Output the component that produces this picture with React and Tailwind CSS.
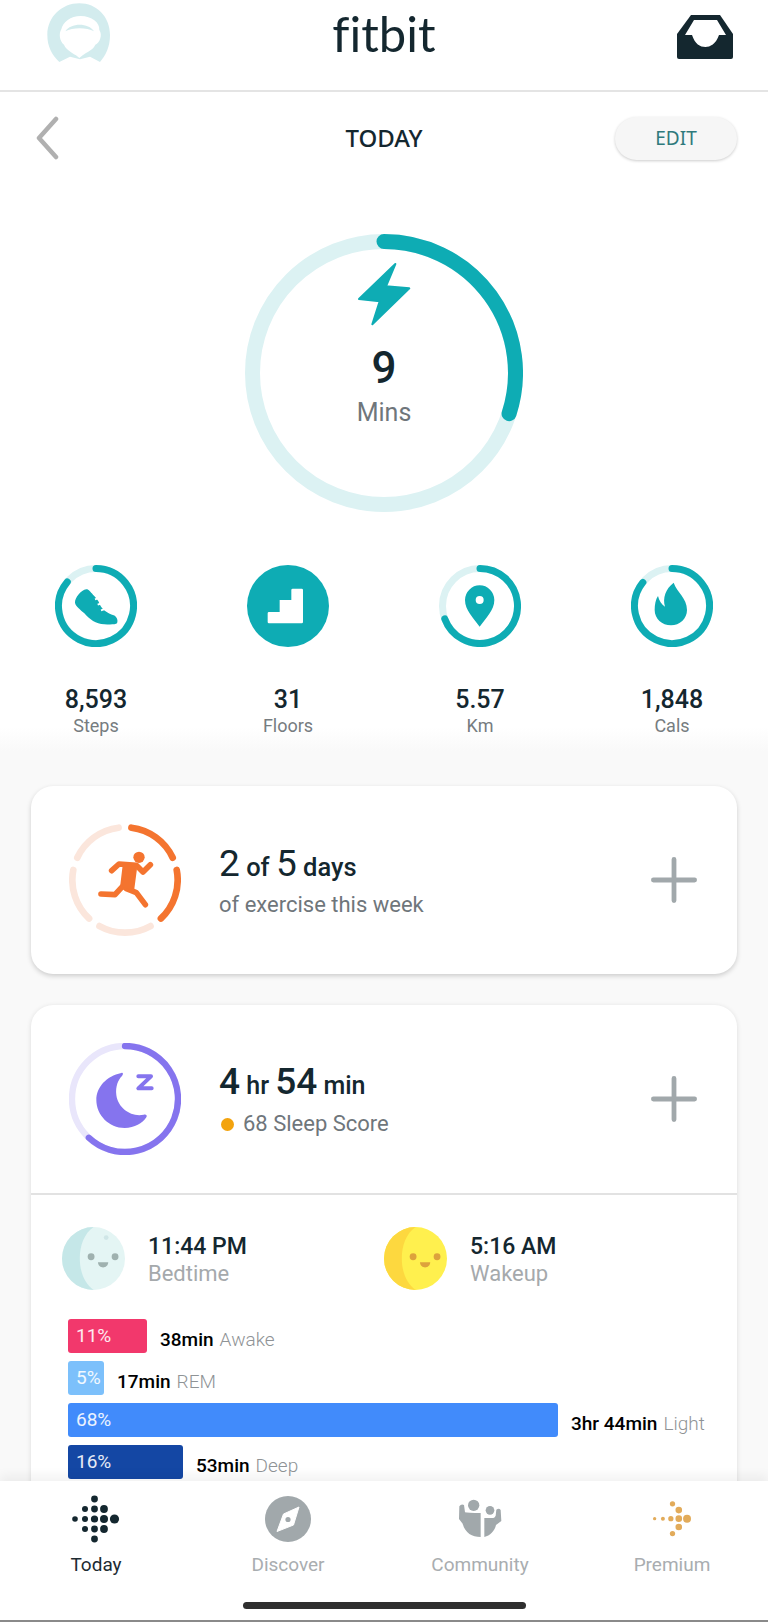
const TEAL = "#0eacb4";
const TRACK = "#dcf2f3";

// clockwise arc, 0deg is 12 o'clock
function arc(cx, cy, r, from, to) {
  const pt = (deg) => {
    const a = ((deg - 90) * Math.PI) / 180;
    return `${cx + r * Math.cos(a)} ${cy + r * Math.sin(a)}`;
  };
  const large = to - from > 180 ? 1 : 0;
  return `M${pt(from)} A${r} ${r} 0 ${large} 1 ${pt(to)}`;
}

function Arc({ cx, cy, r, from, to, color, width }) {
  return (
    <path
      d={arc(cx, cy, r, from, to)}
      fill="none"
      stroke={color}
      strokeWidth={width}
      strokeLinecap="round"
    />
  );
}

const ShoeIcon = () => (
  <>
    <path
      d="M168 120 C176 120 180 128 188 136 C196 144 204 152 208 164 C214 180 232 192 250 198 C260 202 264 214 260 222 C256 226 240 226 222 225 C196 224 178 210 162 192 C150 180 136 172 134 160 C133 146 152 122 168 120 Z"
      fill={TEAL}
    />
    <path d="M194 150 L218 142 M202 166 L226 158 M212 183 L236 175" stroke="#fff" strokeWidth="6" />
  </>
);

const StairsIcon = () => (
  <path
    d="M718 188 H750 V152 H785 V122 Q785 118 789 118 H816 Q820 118 820 122 V218 Q820 222 816 222 H718 Q714 222 714 218 V192 Q714 188 718 188 Z"
    fill="#fff"
  />
);

const PinIcon = () => (
  <>
    <path
      d="M239 232 C220 206 195 182 195 152 A44 44 0 0 1 283 152 C283 182 258 206 239 232 Z"
      fill={TEAL}
    />
    <circle cx="239" cy="152" r="12" fill="#fff" />
  </>
);

const FlameIcon = () => (
  <path
    d="M820 100 C830 130 860 145 860 182 C860 208 838 228 812 228 C785 228 763 208 763 182 C763 166 766 150 773 140 C776 154 784 166 794 172 C786 146 796 118 820 100 Z"
    fill={TEAL}
  />
);

const stats = [
  { value: "8,593", label: "Steps", box: "74 47 246 246", from: 0, to: 310, Icon: ShoeIcon },
  { value: "31", label: "Floors", box: "652 47 246 246", filled: true, Icon: StairsIcon },
  { value: "5.57", label: "Km", box: "117 47 246 246", from: 0, to: 250, Icon: PinIcon },
  { value: "1,848", label: "Cals", box: "692 47 246 246", from: 0, to: 309, Icon: FlameIcon },
];

function StatRing({ stat }) {
  const { box, from, to, filled, Icon } = stat;
  const [x, y] = box.split(" ").map(Number);
  const cx = x + 123;
  const cy = y + 123;
  return (
    <svg viewBox={box} className="w-[82px] h-[82px]">
      {filled ? (
        <circle cx={cx} cy={cy} r="123" fill={TEAL} />
      ) : (
        <>
          <circle cx={cx} cy={cy} r="112.5" fill="none" stroke={TRACK} strokeWidth="21" />
          <Arc cx={cx} cy={cy} r={112.5} from={from} to={to} color={TEAL} width={21} />
        </>
      )}
      <Icon />
    </svg>
  );
}

function ExerciseRing() {
  const segs = [36, 108, 180, 252, 324];
  return (
    <svg viewBox="148 132 336 336" className="w-[112px] h-[112px] shrink-0">
      {segs.map((mid, i) => (
        <Arc
          key={mid}
          cx={316}
          cy={300}
          r={158}
          from={mid - 29}
          to={mid + 29}
          color={i < 2 ? "#f4742f" : "#fbe6dc"}
          width={20}
        />
      ))}
      <circle cx="358" cy="232" r="17" fill="#f4742f" />
      <path
        d="M276 272 L298 252 L350 256 L370 276 L392 254 M320 326 L350 338 L377 374 M306 322 L286 344 L244 342"
        fill="none"
        stroke="#f4742f"
        strokeWidth="17"
        strokeLinecap="round"
        strokeLinejoin="round"
      />
      <path d="M312 256 L350 258 L340 334 L304 322 Z" fill="#f4742f" stroke="#f4742f" strokeWidth="6" strokeLinejoin="round" />
    </svg>
  );
}

function SleepRing() {
  return (
    <svg viewBox="148 129 336 336" className="w-[112px] h-[112px] shrink-0">
      <circle cx="316" cy="297" r="159" fill="none" stroke="#e9e6fb" strokeWidth="19" />
      <Arc cx={316} cy={297} r={159} from={0} to={223} color="#8574ee" width={19} />
      <path
        d="M305 219 C260 228 230 262 230 300 C230 345 268 384 315 384 C345 384 368 370 380 352 C384 345 378 342 372 344 C335 352 295 325 290 285 C287 260 295 240 307 228 C312 222 310 217 305 219 Z"
        fill="#8574ee"
      />
      <path
        d="M356 229 H394 L356 265 H396"
        fill="none"
        stroke="#8574ee"
        strokeWidth="12"
        strokeLinejoin="round"
        strokeLinecap="round"
      />
    </svg>
  );
}

function MoonFace({ light, dark, feature, crater }) {
  return (
    <svg viewBox="63 51 184 184" className="w-[63px] h-[63px] shrink-0">
      <circle cx="155" cy="143" r="92" fill={light} />
      <path
        d="M155 51 A92 92 0 0 0 155 235 C128 215 115 180 115 143 C115 105 128 70 155 51 Z"
        fill={dark}
      />
      {crater && <circle cx="192" cy="82" r="7" fill={crater} />}
      <circle cx="148" cy="138" r="10" fill={feature} />
      <circle cx="218" cy="138" r="10" fill={feature} />
      <path d="M168 154 H198 C197 174 169 174 168 154 Z" fill={feature} />
    </svg>
  );
}

function PlusIcon() {
  return (
    <svg viewBox="0 0 48 48" className="w-[46px] h-[46px] shrink-0">
      <path d="M24 2.500 V45.500 M2.500 24 H45.500" stroke="#a1a8ab" strokeWidth="5" strokeLinecap="round" />
    </svg>
  );
}

const sleepBars = [
  { pct: "11%", width: 79, color: "bg-[#f2386c]", time: "38min", stage: "Awake" },
  { pct: "5%", width: 36, color: "bg-[#7cc0fb]", time: "17min", stage: "REM" },
  { pct: "68%", width: 490, color: "bg-[#418bfb]", time: "3hr 44min", stage: "Light" },
  { pct: "16%", width: 115, color: "bg-[#1447a4]", time: "53min", stage: "Deep" },
];

const TodayIcon = () => (
  <svg viewBox="-4 0 60 60" className="w-[60px] h-[60px]">
    <g fill="#14272f">
      <circle cx="5" cy="30" r="2.8" />
      <circle cx="15" cy="20" r="3" />
      <circle cx="15" cy="30" r="3" />
      <circle cx="15" cy="40" r="3" />
      <circle cx="24.500" cy="10" r="3.4" />
      <circle cx="24.500" cy="20" r="3.4" />
      <circle cx="24.500" cy="30" r="3.6" />
      <circle cx="24.500" cy="40" r="3.4" />
      <circle cx="24.500" cy="50" r="3.4" />
      <circle cx="34" cy="20" r="3.9" />
      <circle cx="34" cy="30" r="4" />
      <circle cx="34" cy="40" r="3.9" />
      <circle cx="44.500" cy="30" r="4.6" />
    </g>
  </svg>
);

const DiscoverIcon = () => (
  <svg viewBox="0 0 60 60" className="w-[60px] h-[60px]">
    <circle cx="30" cy="30" r="23" fill="#a1a8ab" />
    <path d="M41 18 L35.500 36 L19 42.500 L25.500 25 Z" fill="#fff" stroke="#fff" strokeWidth="1" strokeLinejoin="round" />
    <circle cx="30" cy="30.500" r="2.600" fill="#a1a8ab" />
  </svg>
);

const CommunityIcon = () => (
  <svg viewBox="222 100 132 120" className="w-[44px] h-[40px]">
    <g fill="#a1a8ab">
      <circle cx="269" cy="119" r="17" />
      <circle cx="318" cy="134" r="13" />
      <path d="M226 122 Q232 113 240 118 L243 140 Q250 142 290 142 V214 C264 214 243 202 236 174 L225 160 Z" />
      <path d="M301 157 H328 Q333 156 335 150 L337 132 Q345 126 350 133 L352 166 L336 178 C332 196 318 210 301 214 Z" />
    </g>
  </svg>
);

const premiumDots = [
  [811, 149, 5], [836, 149, 6], [860, 149, 8], [884, 149, 10], [909, 149, 12],
  [884, 123, 10], [884, 174, 10], [865, 104, 8], [865, 194, 8],
];

const PremiumIcon = () => (
  <svg viewBox="800 90 130 120" className="w-[43px] h-[40px]">
    {premiumDots.map(([cx, cy, r]) => (
      <circle key={`${cx}-${cy}`} cx={cx} cy={cy} r={r} fill="#e2ab5a" />
    ))}
  </svg>
);

const tabs = [
  { label: "Today", Icon: TodayIcon, active: true },
  { label: "Discover", Icon: DiscoverIcon },
  { label: "Community", Icon: CommunityIcon },
  { label: "Premium", Icon: PremiumIcon },
];

export default function App() {
  return (
    <div className="w-[768px] h-[1622px] flex flex-col overflow-hidden bg-[#f9f9f9] font-['Roboto',sans-serif]">
      {/* Top bar */}
      <header className="h-[92px] shrink-0 bg-white border-b-2 border-[#e4e4e4] grid grid-cols-[1fr_auto_1fr] items-start pl-[40px] pr-[34px]">
        <svg viewBox="0 0 240 210" className="w-[80px] h-[70px]">
          <path
            d="M118 10 C170 10 210 50 210 105 C210 140 198 165 180 186 L150 170 L120 178 L90 170 L58 186 C36 165 22 140 22 105 C22 50 66 10 118 10 Z"
            fill="#d3ecee"
          />
          <path
            d="M122 48 C155 48 180 68 178 90 C188 104 180 128 166 134 C160 150 140 156 128 166 L118 174 L108 166 C92 156 78 148 72 134 C58 124 56 100 64 88 C68 66 92 48 122 48 Z"
            fill="#fff"
          />
          <path d="M76 94 C92 68 146 68 162 94 C140 82 98 82 76 94 Z" fill="#d3ecee" />
        </svg>
        <span className="mt-[3px] -ml-[6px] font-['Lato',sans-serif] text-[49px] leading-[60px] text-[#14272f] [font-variant-ligatures:none]">fitbit</span>
        <svg viewBox="0 0 58 46" className="mt-[14px] justify-self-end w-[58px] h-[46px]">
          <path
            d="M15 1 H44 L57 20 V43 Q57 45 55 45 H3 Q1 45 1 43 V20 Z"
            fill="#14272f"
          />
          <path
            d="M18 6 H41 L50 21 H43 C40 30 34 33 29.500 33 C24 33 19 30 16 21 H9 Z"
            fill="#fff"
          />
        </svg>
      </header>

      <main className="flex-1 min-h-0 overflow-hidden">
        <section className="bg-white h-[635px]">
          {/* Title row */}
          <div className="grid grid-cols-[1fr_auto_1fr] items-center pt-[24px] pl-[34px] pr-[31px]">
            <svg viewBox="0 0 26 44" className="w-[26px] h-[44px]">
              <path d="M22 3 L5 22 L22 41" fill="none" stroke="#b0b0b0" strokeWidth="4.500" strokeLinecap="round" strokeLinejoin="round" />
            </svg>
            <span className="-ml-[3px] font-['Noto_Sans',sans-serif] text-[24px] font-medium text-[#14272f]">TODAY</span>
            <button className="justify-self-end w-[122px] h-[43px] rounded-full bg-[#f6f6f6] shadow-[0_1px_3px_rgba(0,0,0,0.2)] font-['Noto_Sans',sans-serif] text-[19px] text-[#2f7a7c]">
              EDIT
            </button>
          </div>

          {/* Active minutes ring */}
          <div className="mt-[74px] mx-auto w-[278px] h-[278px] grid">
            <svg viewBox="0 0 278 278" className="col-start-1 row-start-1 w-[278px] h-[278px]">
              <circle cx="139" cy="139" r="131.500" fill="none" stroke={TRACK} strokeWidth="15" />
              <Arc cx={139} cy={139} r={131.5} from={0} to={108} color={TEAL} width={15} />
            </svg>
            <div className="col-start-1 row-start-1 flex flex-col items-center pt-[28px]">
              <svg viewBox="410 125 165 195" className="w-[55px] h-[65px]">
                <path d="M525 131 L416 236 L478 243 L456 312 L567 204 L497 198 Z" fill={TEAL} stroke={TEAL} strokeWidth="6" strokeLinejoin="round" />
              </svg>
              <span className="mt-[19px] text-[44px] leading-[44px] font-medium text-[#14272f]">9</span>
              <span className="mt-[9px] text-[25px] leading-[28px] text-[#6f767b]">Mins</span>
            </div>
          </div>

          {/* Daily stats */}
          <div className="mt-[53px] grid grid-cols-4">
            {stats.map((stat) => (
              <div key={stat.label} className="flex flex-col items-center">
                <StatRing stat={stat} />
                <span className="mt-[39px] text-[25px] leading-[28px] font-[460] text-[#14272f]">{stat.value}</span>
                <span className="text-[18px] leading-[23px] text-[#767c80]">{stat.label}</span>
              </div>
            ))}
          </div>
        </section>

        <div className="pt-[59px] px-[31px] flex flex-col gap-[31px] bg-[linear-gradient(#ffffff,#f9f9f9_24px)]">
          {/* Exercise card */}
          <div className="h-[188px] rounded-[22px] bg-white shadow-[0_2px_5px_rgba(0,0,0,0.18)] flex items-center pl-[38px] pr-[40px]">
            <ExerciseRing />
            <div className="ml-[38px] flex-1">
              <div className="text-[#14272f] text-[25.5px] leading-[46px] font-medium">
                <span className="text-[37px] font-normal">2</span> of{" "}
                <span className="text-[37px] font-normal">5</span> days
              </div>
              <div className="text-[22px] leading-[30px] text-[#6f767b]">of exercise this week</div>
            </div>
            <PlusIcon />
          </div>

          {/* Sleep card */}
          <div className="rounded-t-[22px] bg-white shadow-[0_1px_5px_rgba(0,0,0,0.12)] pb-[12px]">
            <div className="h-[188px] flex items-center pl-[38px] pr-[40px]">
              <SleepRing />
              <div className="ml-[38px] flex-1">
                <div className="text-[#14272f] text-[25px] leading-[46px] font-medium">
                  <span className="text-[37px]">4</span> hr <span className="text-[37px]">54</span> min
                </div>
                <div className="flex items-center text-[22px] leading-[30px] text-[#6f767b]">
                  <span className="w-[13px] h-[13px] rounded-full bg-[#f3a30d] mr-[9px] ml-[2px]" />
                  68 Sleep Score
                </div>
              </div>
              <PlusIcon />
            </div>

            <div className="border-t-2 border-[#e2e2e2] pt-[32px] pl-[31px] pr-[20px]">
              <div className="flex">
                <div className="w-[322px] flex items-center gap-[23px]">
                  <MoonFace light="#e4f5f4" dark="#c5e7e8" feature="#9fb1af" crater="#cfe6e7" />
                  <div>
                    <div className="mt-[2px] text-[23px] leading-[27px] font-medium text-[#14272f]">11:44 PM</div>
                    <div className="text-[22px] leading-[27px] text-[#a5a9ac]">Bedtime</div>
                  </div>
                </div>
                <div className="flex items-center gap-[23px]">
                  <MoonFace light="#fff04e" dark="#fdd83f" feature="#dda23c" />
                  <div>
                    <div className="mt-[2px] text-[23px] leading-[27px] font-medium text-[#14272f]">5:16 AM</div>
                    <div className="text-[22px] leading-[27px] text-[#a5a9ac]">Wakeup</div>
                  </div>
                </div>
              </div>

              <div className="mt-[29px] ml-[6px] flex flex-col gap-[8px]">
                {sleepBars.map((bar) => (
                  <div key={bar.stage} className="flex items-start whitespace-nowrap">
                    <div
                      className={`h-[34px] shrink-0 rounded-[3px] ${bar.color} flex items-center pl-[8px] text-[19px] text-white/90`}
                      style={{ width: bar.width }}
                    >
                      {bar.pct}
                    </div>
                    <span className="ml-[13px] pt-[8px] text-[19px] leading-[26px] font-medium text-black">{bar.time}</span>
                    <span className="ml-[6px] pt-[8px] text-[19px] leading-[26px] font-light text-[#8f9396]">{bar.stage}</span>
                  </div>
                ))}
              </div>
            </div>
          </div>
        </div>
      </main>

      {/* Bottom tabs */}
      <nav className="relative h-[141px] shrink-0 bg-white shadow-[0_-6px_10px_rgba(0,0,0,0.05)] border-b-2 border-[#8a8a8a]">
        <div className="grid grid-cols-4 pt-[8px]">
          {tabs.map(({ label, Icon, active }) => (
            <div key={label} className="flex flex-col items-center">
              <div className="h-[60px] flex items-center justify-center">
                <Icon />
              </div>
              <span className={`mt-[3px] text-[19px] leading-[26px] ${active ? "text-[#1d2b32]" : "text-[#a9adb0]"}`}>
                {label}
              </span>
            </div>
          ))}
        </div>
        <div className="mt-[24px] mx-auto w-[283px] h-[7px] rounded-full bg-[#2f2f2f]" />
      </nav>
    </div>
  );
}
